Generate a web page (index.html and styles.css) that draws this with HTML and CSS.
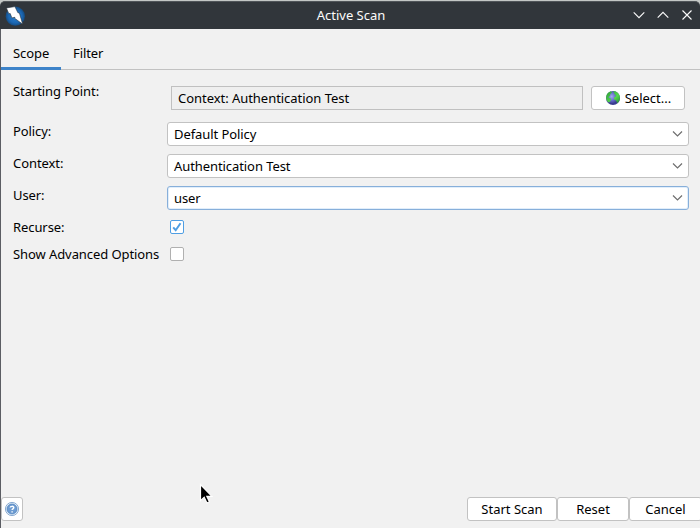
FILE: index.html
```html
<!DOCTYPE html>
<html lang="en">
<head>
<meta charset="utf-8">
<title>Active Scan</title>
<link rel="stylesheet" href="styles.css">
</head>
<body>
<div class="window">
  <header class="titlebar">
    <svg class="logo" width="20" height="20" viewBox="0 0 20 20">
      <defs><radialGradient id="disc"><stop offset="0" stop-color="#2a80d0"/><stop offset=".7" stop-color="#1c68b4"/><stop offset="1" stop-color="#154c82"/></radialGradient></defs>
      <circle cx="10.3" cy="10.2" r="9.6" fill="url(#disc)"/>
      <path d="M1.4 1.9 9.9.6l3 6.1 1.5.4 3.3 11.1-8.1-6 .3-.9-3 .6-1.7-4.4-1.4.2z" fill="#fff" stroke="#202b35" stroke-width=".6"/>
    </svg>
    <h1 class="title">Active Scan</h1>
    <div class="controls">
      <svg width="12" height="12" viewBox="0 0 12 12"><path d="M.7 3.4 6 8.7l5.3-5.3"/></svg>
      <svg width="12" height="12" viewBox="0 0 12 12"><path d="M.7 8.7 6 3.4l5.3 5.3"/></svg>
      <svg width="12" height="12" viewBox="0 0 12 12"><path d="m1.5 1.5 9 9m0-9-9 9"/></svg>
    </div>
  </header>
  <nav class="tabs">
    <span class="tab active">Scope</span>
    <span class="tab">Filter</span>
  </nav>
  <main class="form">
    <div class="row row-start">
      <span class="label">Starting Point:</span>
      <div class="field">Context: Authentication Test</div>
      <button class="button select">
        <svg width="16" height="16" viewBox="0 0 16 16">
          <defs><radialGradient id="sea" cx=".4" cy=".4"><stop offset="0" stop-color="#a3abee"/><stop offset=".6" stop-color="#6267c8"/><stop offset="1" stop-color="#3a3c90"/></radialGradient>
          <linearGradient id="land" x1="0" y1="0" x2="1" y2="1"><stop offset="0" stop-color="#2c9a38"/><stop offset=".6" stop-color="#55d84d"/><stop offset="1" stop-color="#238a38"/></linearGradient></defs>
          <circle cx="8" cy="8" r="7" fill="url(#sea)"/>
          <path d="M1.2 6.5C1.7 3.8 3.6 1.8 6 1.3l1.1 1.1-1.7 1.7-.4 2-1.6.8 1 1.1 1.8.7-.6 2.4-1.8 1.5C1.8 11.2.8 9 1.2 6.5zM8.2 1C12 1.2 14.8 4 15 7.6c0 2.3-1 4.3-2.6 5.6l-1.3-2.5L8.8 9.1l.6-2 1.8-.9L9.4 4.1z" fill="url(#land)"/>
        </svg>
        <span>Select...</span>
      </button>
    </div>
    <div class="row row-combo">
      <span class="label">Policy:</span>
      <div class="combo"><span>Default Policy</span><svg width="11" height="8" viewBox="0 0 11 8"><path d="M1 1.5 5.5 6 10 1.5"/></svg></div>
    </div>
    <div class="row row-combo">
      <span class="label">Context:</span>
      <div class="combo"><span>Authentication Test</span><svg width="11" height="8" viewBox="0 0 11 8"><path d="M1 1.5 5.5 6 10 1.5"/></svg></div>
    </div>
    <div class="row row-combo">
      <span class="label">User:</span>
      <div class="combo focused"><span>user</span><svg width="11" height="8" viewBox="0 0 11 8"><path d="M1 1.5 5.5 6 10 1.5"/></svg></div>
    </div>
    <div class="row row-check">
      <span class="label">Recurse:</span>
      <span class="check checked"><svg width="12" height="12" viewBox="0 0 12 12"><path d="m2.2 6.3 2.5 2.9 4.8-7"/></svg></span>
    </div>
    <div class="row row-check">
      <span class="label">Show Advanced Options</span>
      <span class="check"></span>
    </div>
  </main>
  <footer class="footer">
    <button class="button help" aria-label="Help">
      <svg width="16" height="16" viewBox="0 0 16 16">
        <circle cx="8" cy="8" r="6.6" fill="#e4eef8" stroke="#7fa4cd" stroke-width=".9"/>
        <circle cx="8" cy="8" r="5" fill="#6d9cd2" stroke="#4a7eba" stroke-width=".7"/>
        <path d="M6.2 6.6C6.2 5 9.8 4.8 9.8 6.6c0 1.2-1.7 1.3-1.7 2.4M8.1 10.2v1.4" fill="none" stroke="#fff" stroke-width="1.4"/>
      </svg>
    </button>
    <button class="button start">Start Scan</button>
    <button class="button reset">Reset</button>
    <button class="button cancel">Cancel</button>
  </footer>
  <svg class="pointer" width="16" height="24" viewBox="0 0 16 24">
    <path d="M1.5 1.5v16.2l3.7-3.4 2.7 5.7 2.5-1.2-2.6-5.5h5.1z" fill="#000" stroke="#fff" stroke-width="1.2"/>
  </svg>
</div>
</body>
</html>
```
FILE: styles.css
```css
* { box-sizing: border-box; }

body {
  margin: 0;
  background: #c3c7c5;
  font: 13px/18px "Noto Sans", sans-serif;
  color: #000;
}

svg { display: block; flex: none; }

.window {
  position: relative;
  display: flex;
  flex-direction: column;
  width: 700px;
  height: 528px;
  padding-top: 1px;
  overflow: hidden;
}

.titlebar {
  display: grid;
  grid-template-columns: 80px 1fr 80px;
  align-items: center;
  height: 28px;
  flex: none;
  padding: 0 7px 0 5px;
  background: #31363b;
  border-top: 1px solid #505559;
  border-radius: 5px 5px 0 0;
  color: #fcfcfc;
}

.title {
  margin: 0 0 2px 4px;
  font-size: 13px;
  font-weight: 400;
  text-align: center;
}

.controls {
  display: flex;
  justify-content: flex-end;
  gap: 12px;
  padding-bottom: 1px;
}

.controls path { fill: none; stroke: #fcfcfc; stroke-width: 1.1; }

.tabs {
  display: flex;
  flex: none;
  height: 41px;
  background: #f1f1f1;
  border-left: 1px solid #5b5d63;
  box-shadow: inset 0 -1px #c2c2c2;
  letter-spacing: -0.08px;
}

.tab { padding: 15px 12px 0; }

.tab.active { width: 60px; border-bottom: 3px solid #3d83c9; }

.form {
  flex: 1;
  padding: 12px 11px 0 12px;
  background: #f1f1f1;
  border-left: 1px solid #5b5d63;
  letter-spacing: -0.08px;
}

.row { display: flex; align-items: flex-start; }

.label { width: 154px; flex: none; white-space: nowrap; }

.row-start { height: 40px; padding-right: 4px; }

.field {
  flex: 1;
  height: 24px;
  margin: 4px 8px 0 4px;
  padding: 2px 6px;
  border: 1px solid #c0c0c0;
  background: #efefef;
  letter-spacing: -0.04px;
}

.button {
  display: flex;
  align-items: center;
  justify-content: center;
  flex: none;
  height: 24px;
  padding: 0;
  border: 1px solid #c2c2c2;
  border-radius: 3px;
  background: #fff;
  color: #000;
  font: inherit;
}

.select { width: 94px; margin-top: 4px; gap: 4px; }

.row-combo { height: 32px; }

.combo {
  display: flex;
  flex: 1;
  align-items: center;
  justify-content: space-between;
  height: 24px;
  padding: 0 5px 0 6px;
  border: 1px solid #c2c2c2;
  border-radius: 3px;
  background: #fff;
}

.combo path { fill: none; stroke: #6e6e6e; stroke-width: 1.2; }

.combo.focused { border-color: #87afda; box-shadow: inset 0 0 0 1px #e1eefb; }

.row-check { height: 27px; }

.check {
  width: 14px;
  height: 14px;
  margin: 2px 0 0 3px;
  border: 1px solid #b0b0b0;
  border-radius: 2px;
  background: #fff;
}

.check.checked { border-color: #4f9ee3; }

.check path { fill: none; stroke: #4f9ee3; stroke-width: 2; }

.footer {
  display: flex;
  flex: none;
  height: 31px;
  background: #f1f1f1;
  border-left: 1px solid #5b5d63;
}

.help { width: 22px; margin-right: auto; }

.start { width: 90px; }

.reset { width: 72px; }

.cancel { width: 73px; margin-right: -2px; }

.pointer { position: absolute; left: 199px; top: 483px; }
```
